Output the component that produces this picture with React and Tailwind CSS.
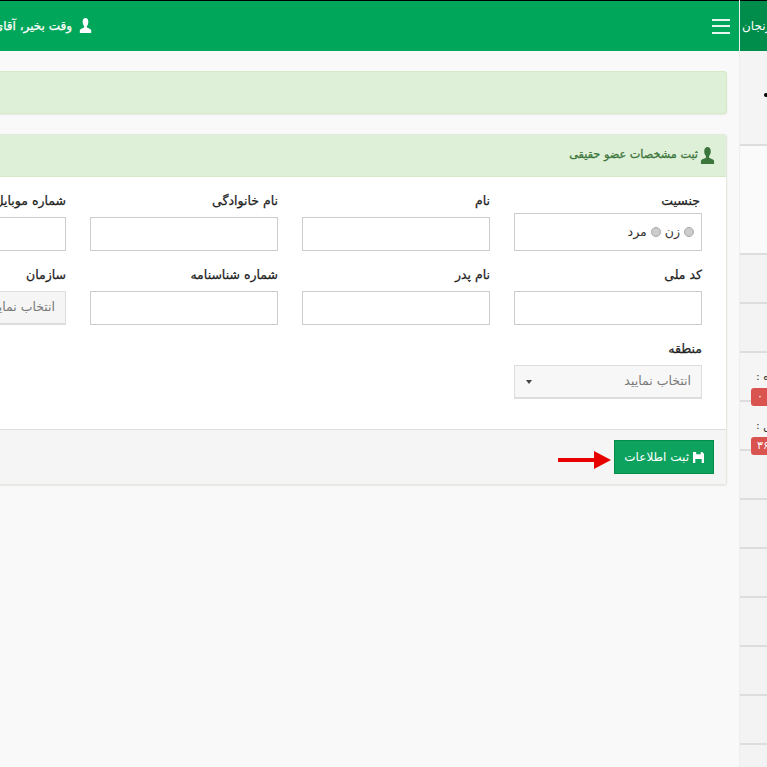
import React from "react";

const font = { fontFamily: '"DejaVu Sans", sans-serif' };

function UserIcon({ className }) {
  return (
    <svg viewBox="0 0 16 16" preserveAspectRatio="none" className={className} fill="currentColor">
      <path d="M8 0C5.800 0 4.500 1.700 4.500 4c0 1.800.7 3.500 1.800 4.500v1.500c-1.900 1-4.800 1.400-5.300 3V16h14v-3c-.5-1.600-3.400-2-5.300-3V8.500c1.100-1 1.800-2.700 1.800-4.500C11.500 1.700 10.200 0 8 0z" />
    </svg>
  );
}

function SaveIcon({ className }) {
  return (
    <svg viewBox="0 0 12 12" className={className} fill="currentColor">
      <path d="M0 0h3.500v2.500h5V0H10l2 2v10H9.500V7.500h-7V12H0z" />
    </svg>
  );
}

function Field({ label, children }) {
  return (
    <div className="px-3">
      <label className="block text-[12.5px] leading-[16px] text-[#222] [-webkit-text-stroke:0.25px] mb-[8px] h-[16px] whitespace-nowrap">
        {label}
      </label>
      {children}
    </div>
  );
}

function TextBox() {
  return <div className="h-[34px] bg-white border border-[#ccc]" />;
}

function Select({ dim }) {
  return (
    <div className={`h-[34px] border border-[#ddd] border-b-2 flex items-center justify-between pr-[10px] pl-[11px] text-[12.5px] text-[#777] ${dim ? "bg-[#f5f5f5]" : "bg-[#f7f7f7]"}`}>
      <span className="whitespace-nowrap">انتخاب نمایید</span>
      <span className="w-0 h-0 border-x-[3px] border-x-transparent border-t-[4px] border-t-[#444]" />
    </div>
  );
}

function Radio() {
  return <span className="inline-block w-[10px] h-[10px] rounded-full bg-[#ccc] border border-[#aaa]" />;
}

function SideRow({ h, tone, children }) {
  return <div className={`border-b-2 border-[#ddd] ${h} ${tone}`}>{children}</div>;
}

function CountRow({ label, count }) {
  return (
    <SideRow h="h-[49px]" tone="bg-[#f5f5f5]">
      <div className="flex flex-col items-end pt-[15px] text-[11px] text-[#333]">
        <div className="w-[229px] pl-[16px] h-[17px] leading-[17px] whitespace-nowrap overflow-hidden text-left" dir="ltr">
          <span dir="rtl" className="inline-block">{label}</span>
        </div>
        <div className="relative z-10 ml-[11px] mt-[3px] h-[18px] px-[6px] bg-[#d9534f] rounded-[3px] text-white text-[11px] leading-[18px]">
          {count}
        </div>
      </div>
    </SideRow>
  );
}

export default function App() {
  return (
    <div dir="ltr" style={font} className="flex w-[767px] h-[767px] overflow-hidden bg-[#f9f9f9]">
      {/* main column */}
      <div dir="rtl" className="w-[739px] shrink-0 overflow-hidden flex flex-col">
        <div className="h-[51px] shrink-0 bg-[#00a65a] border-t border-black flex items-center">
          <button className="mr-[9px] w-[18px] flex flex-col gap-[4.5px]">
            <span className="block h-[2px] bg-white/90" />
            <span className="block h-[2px] bg-white/90" />
            <span className="block h-[2px] bg-white/90" />
          </button>
          <div className="mr-auto w-[92px] overflow-hidden flex items-center gap-[7px] text-white text-[12px] [-webkit-text-stroke:0.25px] whitespace-nowrap -mt-[1px]">
            <UserIcon className="w-[13px] h-[15px] shrink-0 text-white" />
            <span>وقت بخیر، آقای مدیر</span>
          </div>
        </div>

        <div className="mr-[12px] mt-[20px] w-[872px] h-[43px] shrink-0 bg-[#dff0d8] border border-[#d6e9c6] rounded-[3px] shadow-[0_1px_2px_rgba(0,0,0,0.07)]" />

        <div className="mr-[12px] mt-[20px] w-[872px] shrink-0 bg-white border border-[#e3e8df] rounded-[3px] shadow-[0_1px_2px_rgba(0,0,0,0.07)]">
          <div className="h-[42px] bg-[#dff0d8] border-b border-[#d6e9c6] flex items-center gap-[2px] pr-[11px] text-[#3c763d]">
            <UserIcon className="w-[15px] h-[17px] shrink-0 text-[#3c763d]" />
            <span className="text-[11.25px] [-webkit-text-stroke:0.3px] whitespace-nowrap">ثبت مشخصات عضو حقیقی</span>
          </div>

          <div className="h-[252px] pt-[16px] px-3">
            <div className="grid grid-cols-[212px_212px_212px_212px] mb-[16px]">
              <div className="px-3">
                <label className="block text-[12.5px] leading-[16px] text-[#222] [-webkit-text-stroke:0.25px] mb-[4px] pr-[2px]">جنسیت</label>
                <div className="h-[38px] bg-white border border-[#ccc] flex items-center gap-[4px] pr-[7px] text-[12.5px] text-[#333]">
                  <Radio />
                  <span>زن</span>
                  <Radio />
                  <span>مرد</span>
                </div>
              </div>
              <Field label="نام"><TextBox /></Field>
              <Field label="نام خانوادگی"><TextBox /></Field>
              <Field label="شماره موبایل"><TextBox /></Field>
            </div>
            <div className="grid grid-cols-[212px_212px_212px_212px] mb-[16px]">
              <Field label="کد ملی"><TextBox /></Field>
              <Field label="نام پدر"><TextBox /></Field>
              <Field label="شماره شناسنامه"><TextBox /></Field>
              <Field label="سازمان"><Select dim /></Field>
            </div>
            <div className="grid grid-cols-[212px_212px_212px_212px]">
              <Field label="منطقه"><Select /></Field>
            </div>
          </div>

          <div className="h-[55px] bg-[#f5f5f5] border-t border-[#ddd] flex items-center gap-[3px] pr-[12px]">
            <button className="w-[100px] h-[34px] shrink-0 bg-[#0da35f] border border-[#008d4c] text-white text-[12px] flex items-center justify-start pr-[9px] gap-[4px] whitespace-nowrap">
              <SaveIcon className="w-[11px] h-[11px]" />
              ثبت اطلاعات
            </button>
            <svg viewBox="0 0 53 20" className="w-[53px] h-[20px] shrink-0 mt-[6px]">
              <path d="M0 8h36v4H0z M36 1l17 9-17 9z" fill="#e60000" />
            </svg>
          </div>
        </div>
      </div>

      {/* sidebar, cut off by the window */}
      <div className="w-[28px] shrink-0 overflow-hidden border-l border-[#eee]">
        <div dir="rtl" className="w-[230px] flex flex-col">
          <div className="h-[51px] bg-[#008d4c] border-t border-black flex items-center justify-end text-white text-[12px] whitespace-nowrap overflow-hidden">
            <span className="w-[229px] pl-[2px] text-left -mt-[1px]" dir="ltr"><span dir="rtl" className="inline-block">زنجان</span></span>
          </div>
          <SideRow h="h-[95px]" tone="bg-[#f4f4f4]">
            <div className="flex justify-end items-center h-full pb-[5px]">
              <span className="w-[4px] h-[4px] rounded-full bg-black ml-[24px]" />
            </div>
          </SideRow>
          <SideRow h="h-[109px]" tone="bg-[#fafafa]" />
          <SideRow h="h-[49px]" tone="bg-[#f3f3f3]" />
          <SideRow h="h-[49px]" tone="bg-[#f3f3f3]" />
          <CountRow label="تعداد پرونده :" count="۰" />
          <CountRow label="تعداد حق :" count="۳۶" />
          {[0, 1, 2, 3, 4, 5, 6].map((i) => (
            <SideRow key={i} h="h-[49px]" tone="bg-[#f3f3f3]" />
          ))}
        </div>
      </div>
    </div>
  );
}
